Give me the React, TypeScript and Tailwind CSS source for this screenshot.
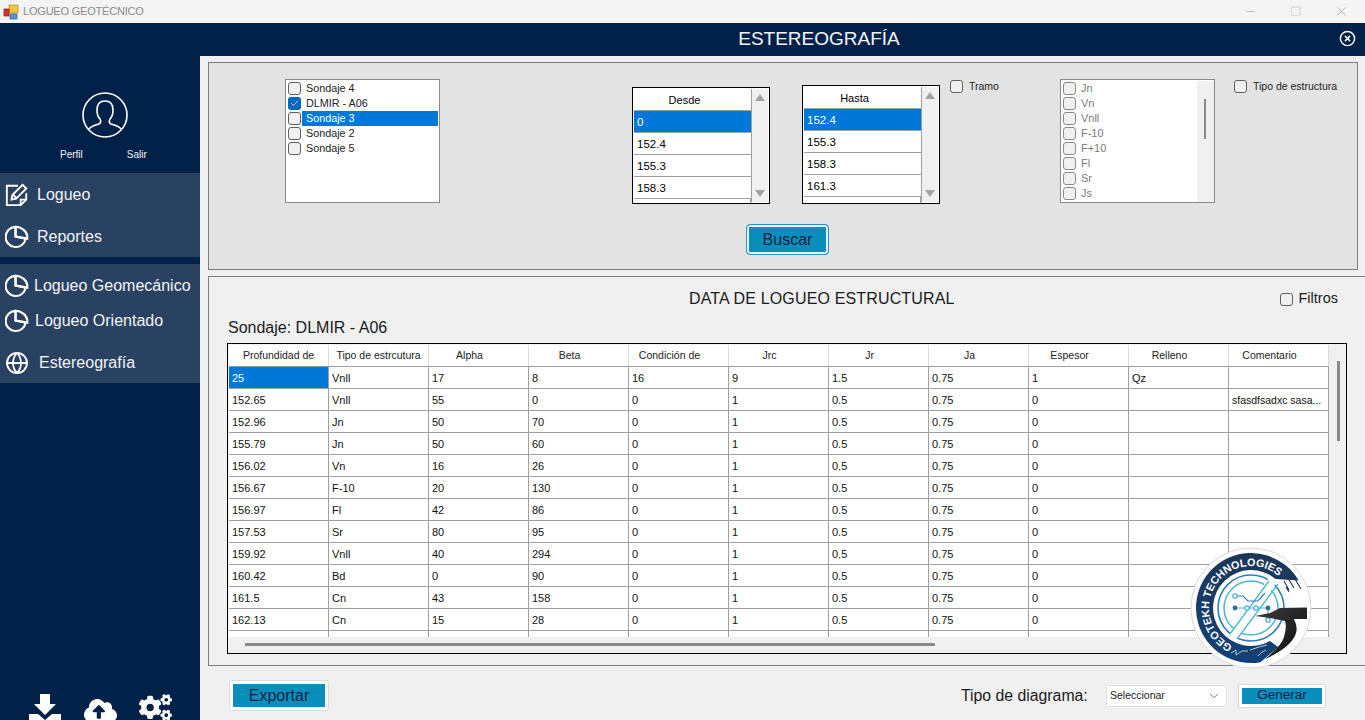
import React from "react";
import { Globe, ChevronDown, Minus, X, Check, CircleX } from "lucide-react";
import { FaCloudUploadAlt, FaCogs } from "react-icons/fa";

const font = "font-['Liberation_Sans',Arial,sans-serif]";

function Box({ checked = false, faded = false }: { checked?: boolean; faded?: boolean }) {
  if (checked)
    return (
      <span className="flex h-[13px] w-[13px] shrink-0 items-center justify-center rounded-[3px] bg-[#0067c0]">
        <Check size={9} color="#fff" strokeWidth={2} />
      </span>
    );
  return <span className={`block h-[13px] w-[13px] shrink-0 rounded-[3px] border ${faded ? "border-[#8a8a8a]" : "border-[#5f5f5f]"} bg-[#f0f0f0]`} />;
}

function Pie({ size = 25 }: { size?: number }) {
  return (
    <svg width={size} height={size} viewBox="0 0 25 25" fill="none" stroke="#fff" strokeWidth="2.2">
      <path d="M11 2.5a10.5 10.5 0 1 0 10.5 12.2L11 12.5z" />
      <path d="M11 12.5V2.4c6 0 11.6 4.400 12.200 9.800v2.500L11 12.500z" />
    </svg>
  );
}

function NoteIcon() {
  return (
    <svg width="26" height="26" viewBox="0 0 26 26" fill="none" stroke="#fff" strokeWidth="2">
      <path d="M14 3H2v21h15l6-6v-7" />
      <path d="M17 24v-6h6" />
      <path d="M7 18l1-5L19 2l4 4-11 11z" />
      <path d="M9 13l4 4" />
    </svg>
  );
}

function UserIcon() {
  return (
    <svg width="46" height="46" viewBox="0 0 46 46" fill="none" stroke="#fff" strokeWidth="1.6">
      <circle cx="23" cy="23" r="22" />
      <path d="M7 37c2-3 7-4 10-5 2-1 2-3 1-5-2-2-3-5-3-9 0-6 3-9 8-9s8 3 8 9c0 4-1 7-3 9-1 2-1 4 1 5 3 1 8 2 10 5" />
    </svg>
  );
}

function DownloadIcon() {
  return (
    <svg width="32" height="29" viewBox="0 0 32 29" fill="#fff" className="shrink-0">
      <path d="M11 0h10v10h6L16 21 5 10h6z" />
      <path d="M0 20h9l7 6 7-6h9v9H0z" />
    </svg>
  );
}

function Logo() {
  return (
    <svg width="122" height="122" viewBox="0 0 122 122" className="absolute left-[1190px] top-[547px]">
      <defs>
        <linearGradient id="ring" x1="0" y1="0" x2="0" y2="1">
          <stop offset="0" stopColor="#1c3658" />
          <stop offset="1" stopColor="#124176" />
        </linearGradient>
        <linearGradient id="hammer" x1="0" y1="0" x2="1" y2="1">
          <stop offset="0" stopColor="#3c3c3e" />
          <stop offset="1" stopColor="#0e0e0f" />
        </linearGradient>
        <path id="arc" d="M42.600 98.700A42 42 0 1 1 97.400 40" />
      </defs>
      <circle cx="61" cy="61" r="60" fill="#fff" stroke="#d8d8d8" />
      <path d="M70.500 115.200A55 55 0 1 1 108.600 33.500L85.400 31.900A38 38 0 1 0 80 94L88 100Z" fill="url(#ring)" />
      <text fontFamily="'Liberation Sans',Arial,sans-serif" fontSize="10.800" fontWeight="700" fill="#fff">
        <textPath href="#arc">GEOTEKH TECHNOLOGIES</textPath>
      </text>
      <circle cx="61" cy="61" r="33" fill="none" stroke="#2f7fb5" strokeWidth="1.600" />
      <circle cx="61" cy="61" r="27" fill="none" stroke="#4bb6d3" strokeWidth="1.500" />
      <path d="M43 90L83 33" stroke="#fff" strokeWidth="9" />
      <path d="M40 87L79 34M47 92L88 37" stroke="#4bb6d3" strokeWidth="1.300" fill="none" />
      <g fill="none" stroke="#4bb6d3" strokeWidth="1.200">
        <path d="M45 61h33M78 61v12" />
        <path d="M45 49h8l5 5h10l7-8" stroke="#2f7fb5" />
      </g>
      <g fill="#fff" stroke="#4bb6d3" strokeWidth="1.300">
        <circle cx="45" cy="49" r="2.200" />
        <circle cx="57" cy="61" r="2.200" />
        <circle cx="66" cy="61" r="2.200" />
        <circle cx="78" cy="73" r="2.200" />
      </g>
      <g fill="#2a6f9f">
        <circle cx="45" cy="61" r="2.400" />
        <circle cx="78" cy="61" r="2.400" />
      </g>
      <path d="M65 69L80 66Q86 63 90 61L117 60.500V72H104Q108 80 106 86Q102 100 75 112Q92 98 94 90Q97 80 95 74L80 71Z" fill="url(#hammer)" />
      <g fill="none" stroke="#26364a" strokeWidth="1.100">
        <path d="M94 34l5 9M98 31l6 10M102 27l9 15M96 40l3 5" />
      </g>
      <g fill="none" stroke="#dbe8f2" strokeWidth="0.800">
        <path d="M41 106l5-3v5l6-4h6M60 103l9-3 8-2M68 109l4-4 4-2" />
      </g>
    </svg>
  );
}

function SideItem({ icon, label, h, gap }: { icon: React.ReactNode; label: string; h: string; gap: string }) {
  return (
    <div className={`flex items-center pl-[5px] ${h} ${gap}`}>
      <span className="flex w-[24px] shrink-0 justify-center">{icon}</span>
      <span className="whitespace-nowrap text-[16px] leading-none text-[#f2f4f7]">{label}</span>
    </div>
  );
}

function MiniGrid({ title, rows, className }: { title: string; rows: string[]; className: string }) {
  return (
    <div className={`flex w-[138px] shrink-0 overflow-hidden border border-black bg-white p-px ${className}`}>
      <div className="w-[117px] shrink-0">
        <div className="flex h-[22px] items-center justify-center border-b border-[#a0a0a0] pr-[16px] pt-[2px] text-[11px] text-black">{title}</div>
        {rows.map((r, i) => (
          <div
            key={r}
            className={`flex h-[22px] items-center border-b border-[#a0a0a0] pl-[3px] pt-[2px] text-[11.5px] ${i === 0 ? "bg-[#0078d7] text-white" : "text-black"}`}
          >
            {r}
          </div>
        ))}
        <div className="h-[22px] border-r border-[#a0a0a0]" />
      </div>
      <div className="flex flex-1 flex-col items-center justify-between border-l border-[#a0a0a0] bg-[#f0f0f0] py-[5px]">
        <span className="h-0 w-0 border-x-[5px] border-b-[7px] border-x-transparent border-b-[#a3a3a3]" />
        <span className="h-0 w-0 border-x-[5px] border-t-[7px] border-x-transparent border-t-[#a3a3a3]" />
      </div>
    </div>
  );
}

const headers = ["Profundidad de", "Tipo de estrcutura", "Alpha", "Beta", "Condición de", "Jrc", "Jr", "Ja", "Espesor", "Relleno", "Comentario"];
const rows: string[][] = [
  ["25", "Vnll", "17", "8", "16", "9", "1.5", "0.75", "1", "Qz", ""],
  ["152.65", "Vnll", "55", "0", "0", "1", "0.5", "0.75", "0", "", "sfasdfsadxc sasa..."],
  ["152.96", "Jn", "50", "70", "0", "1", "0.5", "0.75", "0", "", ""],
  ["155.79", "Jn", "50", "60", "0", "1", "0.5", "0.75", "0", "", ""],
  ["156.02", "Vn", "16", "26", "0", "1", "0.5", "0.75", "0", "", ""],
  ["156.67", "F-10", "20", "130", "0", "1", "0.5", "0.75", "0", "", ""],
  ["156.97", "Fl", "42", "86", "0", "1", "0.5", "0.75", "0", "", ""],
  ["157.53", "Sr", "80", "95", "0", "1", "0.5", "0.75", "0", "", ""],
  ["159.92", "Vnll", "40", "294", "0", "1", "0.5", "0.75", "0", "", ""],
  ["160.42", "Bd", "0", "90", "0", "1", "0.5", "0.75", "0", "", ""],
  ["161.5", "Cn", "43", "158", "0", "1", "0.5", "0.75", "0", "", ""],
  ["162.13", "Cn", "15", "28", "0", "1", "0.5", "0.75", "0", "", ""],
];

function ActionButton({ label, className }: { label: string; className: string }) {
  return (
    <button className={`flex items-center justify-center rounded-[2px] border-[3px] border-white bg-[#0a8fbd] text-[#0c2340] shadow-[0_0_0_1px_#dcdcdc] ${className}`}>
      {label}
    </button>
  );
}

export default function App() {
  return (
    <div className={`relative flex h-[720px] w-[1365px] flex-col overflow-hidden bg-[#f0f0f0] ${font}`}>
      {/* window title bar */}
      <div className="flex h-[23px] shrink-0 items-center bg-[#f4f4f4]">
        <svg width="16" height="16" viewBox="0 0 16 16" className="ml-[3px]">
          <rect x="6" y="1" width="9" height="8" fill="#f3c33c" stroke="#b98a1a" strokeWidth="0.7" />
          <rect x="1" y="5" width="5" height="7" fill="#d9302a" stroke="#8c1a16" strokeWidth="0.7" />
          <rect x="7" y="10" width="7" height="5" fill="#5f8fd8" stroke="#35609f" strokeWidth="0.7" />
        </svg>
        <span className="ml-[4px] text-[11px] tracking-[-0.2px] text-[#8a8a8a]">LOGUEO GEOTÉCNICO</span>
        <div className="ml-auto flex items-center gap-[34px] pr-[16px]">
          <Minus size={13} color="#8e8e8e" strokeWidth={1} />
          <span className="block h-[9px] w-[9px] border border-[#dcdcdc] shadow-[1px_-1px_0_#e4e4e4]" />
          <X size={15} color="#8e8e8e" strokeWidth={1} />
        </div>
      </div>

      {/* app header */}
      <div className="relative flex h-[33px] shrink-0 items-center justify-center bg-[#012148]">
        <span className="ml-[273px] text-[19px] text-[#f4f6f8]">ESTEREOGRAFÍA</span>
        <CircleX size={17} color="#fff" strokeWidth={2} className="absolute right-[9px] top-[7px]" />
      </div>

      <div className="flex min-h-0 flex-1">
        {/* sidebar */}
        <aside className="flex w-[200px] shrink-0 flex-col bg-[#012148]">
          <div className="flex justify-center pl-[10px] pt-[36px]">
            <UserIcon />
          </div>
          <div className="mt-[9px] flex h-[15px] items-center pl-[60px] text-[10px] text-[#f2f4f7]">
            <span>Perfil</span>
            <span className="ml-[44px]">Salir</span>
          </div>
          <div className="mt-[11px] bg-[#2a4261]">
            <SideItem icon={<NoteIcon />} label="Logueo" h="h-[43px]" gap="gap-[8px]" />
            <SideItem icon={<Pie />} label="Reportes" h="h-[41px]" gap="gap-[8px]" />
          </div>
          <div className="mt-[7px] bg-[#2a4261] pt-[4px]">
            <SideItem icon={<Pie />} label="Logueo Geomecánico" h="h-[35px]" gap="gap-[5px]" />
            <SideItem icon={<Pie />} label="Logueo Orientado" h="h-[35px]" gap="gap-[6px]" />
            <SideItem icon={<Globe size={26} color="#fff" strokeWidth={1.8} />} label="Estereografía" h="h-[45px] pt-[5px]" gap="gap-[10px]" />
          </div>
          <div className="mt-auto flex h-[26px] items-start pl-[29px]">
            <DownloadIcon />
            <FaCloudUploadAlt size={33} color="#fff" className="ml-[23px] shrink-0" />
            <FaCogs size={33} color="#fff" className="ml-[22px] -mt-[3px] shrink-0" />
          </div>
        </aside>

        {/* main */}
        <main className="min-w-0 flex-1 pl-[8px] pt-[6px] text-black">
          {/* filter panel */}
          <section className="h-[208px] w-[1150px] border border-[#7d7d7d] bg-[#e3e3e3]">
            <div className="flex items-start pt-[16px] pl-[76px]">
              <div className="h-[124px] w-[155px] shrink-0 border border-[#8a8a8a] bg-white pt-px pl-[2px]">
                {[
                  ["Sondaje 4", false],
                  ["DLMIR - A06", true],
                  ["Sondaje 3", false],
                  ["Sondaje 2", false],
                  ["Sondaje 5", false],
                ].map(([n, c], i) => (
                  <div key={n as string} className="flex h-[15px] items-center">
                    <Box checked={c as boolean} />
                    <span className={`ml-[1px] flex h-[15px] w-[136px] items-center pl-[4px] text-[10.8px] ${i === 2 ? "bg-[#0078d7] text-white" : "text-[#222]"}`}>
                      {n as string}
                    </span>
                  </div>
                ))}
              </div>
              <MiniGrid title="Desde" rows={["0", "152.4", "155.3", "158.3"]} className="ml-[192px] mt-[8px] h-[117px]" />
              <MiniGrid title="Hasta" rows={["152.4", "155.3", "158.3", "161.3"]} className="ml-[32px] mt-[6px] h-[119px]" />
              <label className="ml-[10px] flex items-center gap-[6px] text-[10.5px] text-[#222]">
                <Box />
                Tramo
              </label>
              <div className="relative ml-[61px] flex h-[124px] w-[155px] shrink-0 border border-[#8a8a8a] bg-white pt-px pl-[2px]">
                <div className="flex-1">
                  {["Jn", "Vn", "Vnll", "F-10", "F+10", "Fl", "Sr", "Js"].map((s) => (
                    <div key={s} className="flex h-[15px] items-center gap-[5px] text-[11px] text-[#7a7a7a]">
                      <Box faded />
                      {s}
                    </div>
                  ))}
                </div>
                <div className="w-[17px] bg-[#f0f0f0] pt-[18px]">
                  <div className="mx-auto h-[40px] w-[2px] bg-[#8a8a8a]" />
                </div>
              </div>
              <label className="ml-[19px] flex items-center gap-[6px] whitespace-nowrap text-[10.5px] text-[#222]">
                <Box />
                Tipo de estructura
              </label>
            </div>
            <div className="ml-[537px] mt-[20px] flex h-[31px] w-[83px] items-center justify-center rounded-[4px] border border-[#2b90d9] bg-[#0a8fbd] text-[16px] text-[#0c2340] shadow-[inset_0_0_0_2px_#eaf4fa]">
              Buscar
            </div>
          </section>

          {/* data panel */}
          <section className="relative mt-[6px] h-[390px] border-y border-l border-[#7d7d7d] bg-[#f0f0f0] pl-[18px] pr-[10px]">
            <div className="flex h-[42px] items-center pt-[2px]">
              <h2 className="ml-[462px] text-[16px] font-normal tracking-[0.15px] text-[#1a1a1a]">DATA DE LOGUEO ESTRUCTURAL</h2>
              <label className="ml-auto mr-[17px] flex items-center gap-[6px] text-[14.5px] text-[#1a1a1a]">
                <Box />
                Filtros
              </label>
            </div>
            <div className="flex h-[18px] items-center pl-px text-[16px] text-[#1a1a1a]">Sondaje: DLMIR - A06</div>
            <div className="mt-[6px] flex h-[311px] w-[1120px] overflow-hidden border border-black bg-[#f0f0f0] p-px">
              <div className="flex w-[1100px] shrink-0 flex-col">
                <div className="h-[292px] shrink-0 overflow-hidden bg-white">
                  <div className="grid h-[22px] grid-cols-[repeat(11,100px)] border-b border-[#a0a0a0] text-[10.5px] text-[#222]">
                    {headers.map((h, j) => (
                      <div key={h} className={`flex items-center justify-center whitespace-nowrap border-r border-[#dcdcdc] ${j >= 2 ? "pr-[18px]" : ""}`}>
                        {h}
                      </div>
                    ))}
                  </div>
                  {rows.map((r, i) => (
                    <div key={r[0]} className="grid h-[22px] grid-cols-[repeat(11,100px)] border-b border-[#a0a0a0] text-[11px] text-[#111]">
                      {r.map((c, j) => (
                        <div
                          key={j}
                          className={`flex items-center overflow-hidden whitespace-nowrap border-r border-[#a0a0a0] pl-[3px] pt-[2px] ${i === 0 && j === 0 ? "bg-[#0078d7] text-white" : ""} ${j === 10 ? "text-[10.5px]" : ""}`}
                        >
                          {c}
                        </div>
                      ))}
                    </div>
                  ))}
                  <div className="grid h-[22px] grid-cols-[repeat(11,100px)]">
                    {headers.map((h) => (
                      <div key={h} className="border-r border-[#a0a0a0]" />
                    ))}
                  </div>
                </div>
                <div className="relative flex-1">
                  <div className="absolute left-[16px] top-[6px] h-[3px] w-[690px] bg-[#8a8a8a]" />
                </div>
              </div>
              <div className="flex-1 pt-[16px]">
                <div className="ml-[8px] h-[80px] w-[3px] bg-[#8a8a8a]" />
              </div>
            </div>
          </section>

          {/* footer */}
          <div className="flex items-center pl-[22px] pt-[15px]">
            <ActionButton label="Exportar" className="h-[29px] w-[98px] text-[16px]" />
            <span className="ml-[633px] w-[128px] whitespace-nowrap text-[15.8px] text-[#1a1a1a]">Tipo de diagrama:</span>
            <div className="ml-[17px] flex h-[22px] w-[121px] items-center justify-between rounded-[2px] border border-[#e0e0e0] bg-white pl-[3px] pr-[5px] text-[10.5px] text-[#222]">
              Seleccionar
              <ChevronDown size={14} color="#555" strokeWidth={1.4} />
            </div>
            <ActionButton label="Generar" className="ml-[12px] h-[22px] w-[86px] text-[13.5px]" />
          </div>
        </main>
      </div>
      <Logo />
    </div>
  );
}
